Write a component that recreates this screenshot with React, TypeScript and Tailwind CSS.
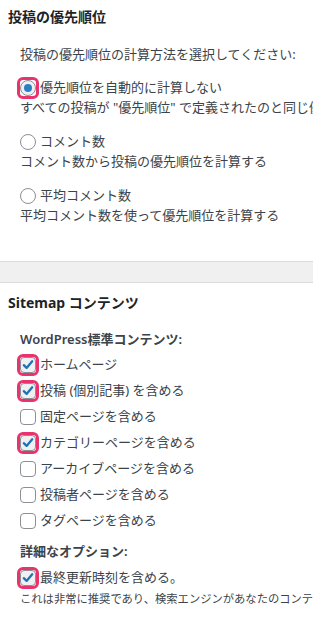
import React from 'react'

const font = { fontFamily: '"Noto Sans", "Noto Sans CJK JP", sans-serif' }

function Highlight() {
  return <span className="pointer-events-none absolute -inset-[3px] rounded-[6px] border-[3px] border-[#e8336e]" />
}

function Radio({ checked, marked }: { checked?: boolean; marked?: boolean }) {
  return (
    <span className="relative flex h-4 w-4 shrink-0">
      <span
        className={`flex h-4 w-4 items-center justify-center rounded-full border border-[#8c8f94] ${
          marked ? 'bg-[#eef0f2]' : 'bg-white'
        }`}
      >
        {checked && <span className="h-2 w-2 rounded-full bg-[#2b7fc0]" />}
      </span>
      {marked && <Highlight />}
    </span>
  )
}

function Checkbox({ checked }: { checked?: boolean }) {
  return (
    <span className="relative flex h-4 w-4 shrink-0">
      <span
        className={`flex h-4 w-4 items-center justify-center rounded-[4px] border border-[#8c8f94] ${
          checked ? 'bg-[#eef0f2]' : 'bg-white'
        }`}
      >
        {checked && (
          <svg viewBox="0 0 16 16" className="h-[14px] w-[14px]">
            <path
              d="M3.2 8.2 L6.4 11.3 L12.8 3.8"
              fill="none"
              stroke="#2271b1"
              strokeWidth="2.6"
              strokeLinecap="round"
              strokeLinejoin="round"
            />
          </svg>
        )}
      </span>
      {checked && <Highlight />}
    </span>
  )
}

const radios = [
  {
    label: '優先順位を自動的に計算しない',
    desc: 'すべての投稿が "優先順位" で定義されたのと同じ優先順位を持ちます',
    checked: true,
  },
  { label: 'コメント数', desc: 'コメント数から投稿の優先順位を計算する' },
  { label: '平均コメント数', desc: '平均コメント数を使って優先順位を計算する' },
]

const contents = [
  { label: 'ホームページ', checked: true },
  { label: '投稿 (個別記事) を含める', checked: true },
  { label: '固定ページを含める' },
  { label: 'カテゴリーページを含める', checked: true },
  { label: 'アーカイブページを含める' },
  { label: '投稿者ページを含める' },
  { label: 'タグページを含める' },
]

export default function App() {
  return (
    <div className="w-[313px] h-[631px] overflow-hidden bg-white text-[13px] text-[#3c434a]" style={font}>
      <section className="px-2 pb-[35px]">
        <h2 className="flex h-8 items-center text-[14px] font-bold text-[#1d2327]">投稿の優先順位</h2>
        <div className="pl-3">
          <p className="mt-[13px] flex h-5 items-center whitespace-nowrap">投稿の優先順位の計算方法を選択してください:</p>
          <div className="mt-[13px] flex flex-col gap-[14px]">
            {radios.map((r) => (
              <div key={r.label}>
                <label className="flex h-5 items-center gap-1 whitespace-nowrap">
                  <Radio checked={r.checked} marked={r.checked} />
                  {r.label}
                </label>
                <p className="flex h-5 items-center whitespace-nowrap">{r.desc}</p>
              </div>
            ))}
          </div>
        </div>
      </section>

      <div className="h-[22px] border-y border-[#dcdcde] bg-[#f0f0f1]" />

      <section className="px-2">
        <h2 className="flex h-[38px] items-center text-[14px] font-bold text-[#1d2327]">Sitemap コンテンツ</h2>
        <div className="pl-3">
          <p className="mt-[9px] flex h-5 items-center font-semibold">WordPress標準コンテンツ:</p>
          <div className="mt-[2px] flex flex-col">
            {contents.map((c) => (
              <label key={c.label} className="flex h-[26px] items-center gap-1 whitespace-nowrap">
                <Checkbox checked={c.checked} />
                {c.label}
              </label>
            ))}
          </div>
          <p className="mt-2 flex h-5 items-center font-semibold">詳細なオプション:</p>
          <label className="mt-[3px] flex h-[26px] items-center gap-1 whitespace-nowrap">
            <Checkbox checked />
            最終更新時刻を含める。
          </label>
          <p className="flex h-4 items-center whitespace-nowrap text-[11.3px]">
            これは非常に推奨であり、検索エンジンがあなたのコンテンツが変更されたことを知るのに役立ちます
          </p>
        </div>
      </section>
    </div>
  )
}
